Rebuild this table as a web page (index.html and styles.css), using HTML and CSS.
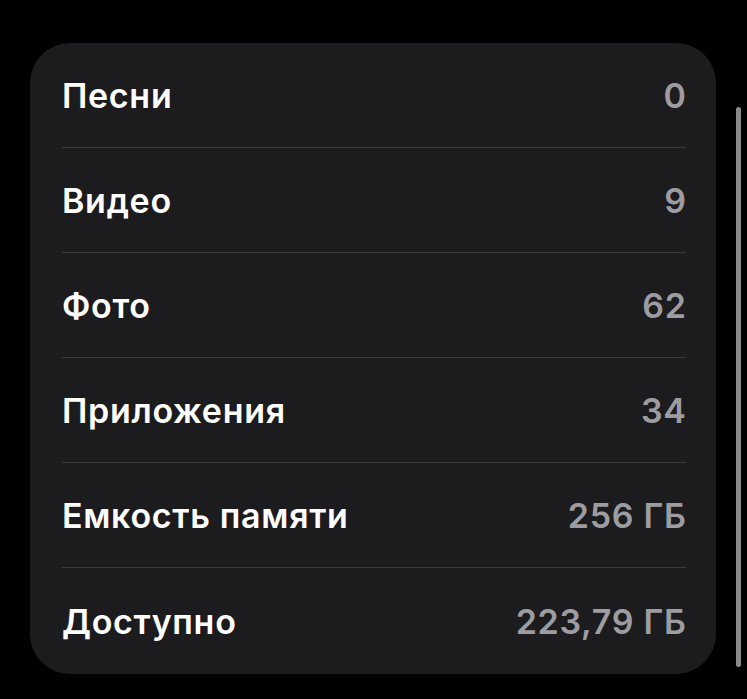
FILE: index.html
```html
<!DOCTYPE html>
<html lang="ru">
<head>
<meta charset="utf-8">
<link rel="stylesheet" href="styles.css">
</head>
<body>
<div class="screen">
  <div class="card">
    <div class="row"><span class="label">Песни</span><span class="value">0</span></div>
    <div class="row"><span class="label">Видео</span><span class="value">9</span></div>
    <div class="row"><span class="label">Фото</span><span class="value">62</span></div>
    <div class="row"><span class="label">Приложения</span><span class="value">34</span></div>
    <div class="row"><span class="label">Емкость памяти</span><span class="value">256 ГБ</span></div>
    <div class="row last"><span class="label">Доступно</span><span class="value">223,79 ГБ</span></div>
  </div>
  <div class="scrollbar"></div>
</div>
</body>
</html>
```
FILE: styles.css
```css
html, body {
  margin: 0;
  padding: 0;
  background: #000;
}
body {
  width: 747px;
  height: 699px;
  overflow: hidden;
  font-family: "Inter", "Liberation Sans", sans-serif;
}
.screen {
  display: flex;
  align-items: flex-start;
  padding: 43px 0 0 30px;
  gap: 20px;
}
.card {
  width: 686px;
  background: #1c1c1e;
  border-radius: 40px;
  display: flex;
  flex-direction: column;
}
.row {
  height: 104px;
  margin: 0 30px 0 32px;
  border-bottom: 1.5px solid #3a3a3c;
  display: flex;
  align-items: center;
  justify-content: space-between;
  font-size: 34px;
  font-weight: 600;
  letter-spacing: 0.7px;
}
.row.last {
  border-bottom: none;
  height: 106px;
}
.label {
  color: #fff;
}
.value {
  color: #9c9ca1;
  margin-right: -0.7px;
}
.scrollbar {
  width: 5px;
  height: 560px;
  margin-top: 64px;
  background: #8a8a8e;
  border-radius: 3px;
}
```
